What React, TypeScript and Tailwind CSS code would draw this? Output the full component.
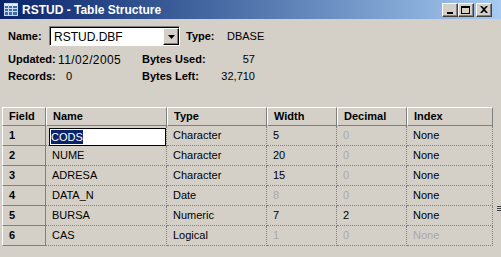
import React from "react";

const font = { fontFamily: '"Liberation Sans", Arial, sans-serif' };

type Row = {
  n: string;
  name: string;
  type: string;
  width: string;
  widthDim?: boolean;
  dec: string;
  decDim?: boolean;
  idx: string;
  idxDim?: boolean;
};

const rows: Row[] = [
  { n: "1", name: "CODS", type: "Character", width: "5", dec: "0", decDim: true, idx: "None" },
  { n: "2", name: "NUME", type: "Character", width: "20", dec: "0", decDim: true, idx: "None" },
  { n: "3", name: "ADRESA", type: "Character", width: "15", dec: "0", decDim: true, idx: "None" },
  { n: "4", name: "DATA_N", type: "Date", width: "8", widthDim: true, dec: "0", decDim: true, idx: "None" },
  { n: "5", name: "BURSA", type: "Numeric", width: "7", dec: "2", idx: "None" },
  { n: "6", name: "CAS", type: "Logical", width: "1", widthDim: true, dec: "0", decDim: true, idx: "None", idxDim: true },
];

function CapBtn({ children }: { children: React.ReactNode }) {
  return (
    <div className="w-[16px] h-[14px] bg-[#d4d0c8] border-t border-l border-t-white border-l-white border-r border-b border-r-[#404040] border-b-[#404040] shadow-[inset_-1px_-1px_0_#808080] flex items-center justify-center">
      {children}
    </div>
  );
}

function TitleIcon() {
  return (
    <svg width="14" height="13" viewBox="0 0 14 13" className="shrink-0">
      <rect x="0.5" y="0.5" width="13" height="12" fill="#3a6ea5" stroke="#c8d8f0" />
      <rect x="1" y="1" width="12" height="2" fill="#e8f0ff" />
      <line x1="1" y1="5.5" x2="13" y2="5.5" stroke="#c8d8f0" />
      <line x1="1" y1="8.5" x2="13" y2="8.5" stroke="#c8d8f0" />
      <line x1="4.5" y1="1" x2="4.5" y2="12" stroke="#c8d8f0" />
      <line x1="8.5" y1="1" x2="8.5" y2="12" stroke="#c8d8f0" />
    </svg>
  );
}

const headCell =
  "h-[19px] flex items-center pl-[6px] font-bold bg-[#d4d0c8] border-t border-l border-t-white border-l-white border-r border-b border-r-[#808080] border-b-[#808080]";
const dataCell =
  "h-[20px] flex items-center pl-[6px] border-r border-b border-dotted border-[#808080]";

export default function App() {
  return (
    <div
      className="relative w-[501px] h-[257px] bg-[#d4d0c8] text-[11px] text-black overflow-hidden"
      style={font}
    >
      {/* Title bar */}
      <div className="h-[19px] bg-linear-to-r from-[#0a246a] to-[#a6caf0] flex items-center pl-[4px] pr-[9px]">
        <TitleIcon />
        <div className="ml-[4px] text-white font-bold text-[12px] leading-none">
          RSTUD - Table Structure
        </div>
        <div className="flex-1" />
        <div className="flex items-center">
          <CapBtn>
            <div className="w-[6px] h-[2px] bg-black mt-[6px] -ml-[1px]" />
          </CapBtn>
          <CapBtn>
            <div className="w-[9px] h-[8px] border border-black border-t-2 -ml-[1px]" />
          </CapBtn>
          <div className="w-[2px]" />
          <CapBtn>
            <svg width="8" height="7" viewBox="0 0 8 7" className="-ml-[1px]">
              <path d="M0 0 L2 0 L4 2 L6 0 L8 0 L5 3.5 L8 7 L6 7 L4 5 L2 7 L0 7 L3 3.5 Z" fill="black" />
            </svg>
          </CapBtn>
        </div>
      </div>

      {/* Name row */}
      <div className="flex items-center mt-[7px] h-[20px]">
        <div className="ml-[8px] w-[41px] font-bold">Name:</div>
        <div className="w-[131px] h-[20px] flex border-t border-l border-t-[#808080] border-l-[#808080] border-r border-b border-r-white border-b-white">
          <div className="flex-1 flex border-t border-l border-black bg-white">
            <div className="flex-1 flex items-center pl-[3px] text-[12px]">RSTUD.DBF</div>
            <div className="w-[16px] h-[17px] mt-[0px] bg-[#d4d0c8] border-t border-l border-t-white border-l-white border-r border-b border-r-black border-b-black shadow-[inset_-1px_-1px_0_#808080] flex items-center justify-center">
              <svg width="7" height="4" viewBox="0 0 7 4">
                <path d="M0 0 L7 0 L3.5 4 Z" fill="black" />
              </svg>
            </div>
          </div>
        </div>
        <div className="ml-[6px] w-[41px] font-bold">Type:</div>
        <div>DBASE</div>
      </div>

      {/* Info rows */}
      <div className="mt-[5px] flex h-[17px] items-center">
        <div className="ml-[8px] w-[50px] font-bold">Updated:</div>
        <div className="w-[84px] text-[12px] tracking-[0.4px]">11/02/2005</div>
        <div className="w-[66px] font-bold">Bytes Used:</div>
        <div className="w-[47px] text-right">57</div>
      </div>
      <div className="flex h-[17px] items-center">
        <div className="ml-[8px] w-[58px] font-bold">Records:</div>
        <div className="w-[76px]">0</div>
        <div className="w-[66px] font-bold">Bytes Left:</div>
        <div className="w-[47px] text-right">32,710</div>
      </div>

      {/* Table */}
      <div className="mt-[22px] ml-[2px] grid grid-cols-[44px_121px_100px_70px_70px_86px]">
        <div className={headCell}>Field</div>
        <div className={headCell}>Name</div>
        <div className={headCell}>Type</div>
        <div className={headCell}>Width</div>
        <div className={headCell}>Decimal</div>
        <div className={headCell}>Index</div>

        {rows.map((r, i) => (
          <React.Fragment key={r.n}>
            <div className="h-[20px] flex items-center pl-[6px] font-bold bg-[#d4d0c8] border-l border-l-white border-r border-b border-r-[#808080] border-b-[#808080]">
              {r.n}
            </div>
            {i === 0 ? (
              <div className="h-[20px] border-r border-b border-dotted border-[#808080]">
                <div className="ml-[3px] mr-[0px] mt-[2px] h-[18px] bg-white border border-black flex items-center pl-[1px]">
                  <span className="bg-[#0a246a] text-white leading-[14px]">CODS</span>
                </div>
              </div>
            ) : (
              <div className={dataCell}>{r.name}</div>
            )}
            <div className={dataCell}>{r.type}</div>
            <div className={dataCell + (r.widthDim ? " text-[#a8a8a8]" : "")}>{r.width}</div>
            <div className={dataCell + (r.decDim ? " text-[#a8a8a8]" : "")}>{r.dec}</div>
            <div className={dataCell + (r.idxDim ? " text-[#a8a8a8]" : "")}>{r.idx}</div>
          </React.Fragment>
        ))}
      </div>

      {/* right edge splitter mark */}
      <div className="absolute left-[497px] top-[206px] w-[4px] flex flex-col gap-[1px]">
        <div className="h-[1px] bg-[#404040]" />
        <div className="h-[1px] bg-[#404040]" />
        <div className="h-[1px] bg-[#404040]" />
      </div>
    </div>
  );
}
